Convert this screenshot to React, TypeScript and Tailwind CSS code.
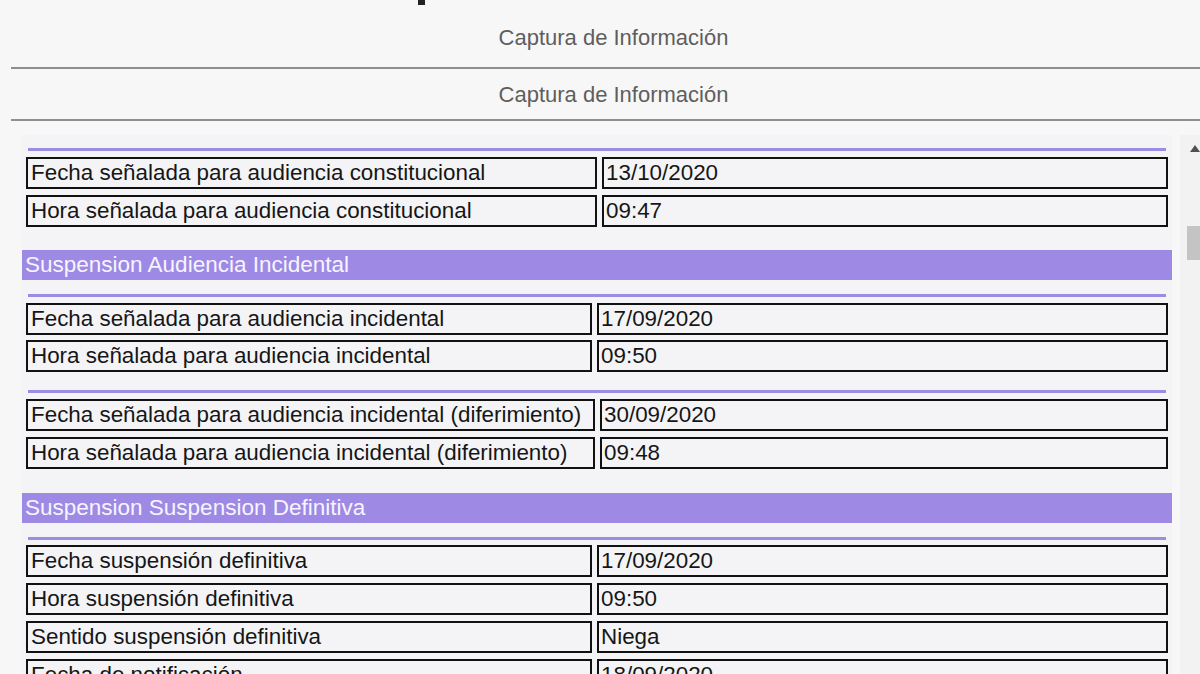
import React from "react";

type Row = { label: string; value: string };

const Divider = () => <div className="mx-[6px] h-[3px] bg-[#9d8ce3]" />;

const SectionBar = ({ title }: { title: string }) => (
  <div className="h-[30px] bg-[#9e8ae4] px-[3px] text-[22.5px] leading-[30px] text-[#f6f4ff]">
    {title}
  </div>
);

const DataTable = ({
  rows,
  labelWidth,
  gap = "gap-[5px]",
}: {
  rows: Row[];
  labelWidth: string;
  gap?: string;
}) => (
  <div className={`mx-[4px] flex flex-col ${gap}`}>
    {rows.map((r) => (
      <div key={r.label} className="flex gap-[5px]">
        <div
          className={`${labelWidth} h-[32px] shrink-0 overflow-hidden whitespace-nowrap border-2 border-[#111] px-[3px] text-[22.4px] leading-[28px] text-[#161616]`}
        >
          {r.label}
        </div>
        <div className="h-[32px] flex-1 border-2 border-[#111] px-[2px] text-[22.4px] leading-[28px] text-[#161616]">
          {r.value}
        </div>
      </div>
    ))}
  </div>
);

export default function App() {
  return (
    <div
      className="h-[674px] overflow-hidden bg-[#f7f7f7]"
      style={{ fontFamily: '"Liberation Sans", Arial, sans-serif' }}
    >
      <div className="h-[6px] pl-[418px]">
        <div className="h-[5px] w-[7px] bg-[#222]" />
      </div>

      <div className="ml-[11px]">
        <div className="flex h-[63px] items-center justify-center border-b-2 border-[#8e8e8e] pl-[16px] pt-[2px] text-[22px] text-[#5e5e5e]">
          Captura de Información
        </div>
        <div className="flex h-[52px] items-center justify-center border-b-2 border-[#8e8e8e] pl-[16px] pt-[1px] text-[22px] text-[#5e5e5e]">
          Captura de Información
        </div>
      </div>

      <div className="mt-[14px] flex">
        <div className="ml-[22px] w-[1150px] bg-[#f4f4f6] pt-[13px]">
          <Divider />
          <div className="mt-[6px]">
            <DataTable
              labelWidth="w-[571px]"
              gap="gap-[6px]"
              rows={[
                { label: "Fecha señalada para audiencia constitucional", value: "13/10/2020" },
                { label: "Hora señalada para audiencia constitucional", value: "09:47" },
              ]}
            />
          </div>

          <div className="mt-[23px]">
            <SectionBar title="Suspension Audiencia Incidental" />
          </div>

          <div className="mt-[14px]">
            <Divider />
          </div>
          <div className="mt-[6px]">
            <DataTable
              labelWidth="w-[566px]"
              rows={[
                { label: "Fecha señalada para audiencia incidental", value: "17/09/2020" },
                { label: "Hora señalada para audiencia incidental", value: "09:50" },
              ]}
            />
          </div>

          <div className="mt-[18px]">
            <Divider />
          </div>
          <div className="mt-[6px]">
            <DataTable
              labelWidth="w-[569px]"
              gap="gap-[6px]"
              rows={[
                { label: "Fecha señalada para audiencia incidental (diferimiento)", value: "30/09/2020" },
                { label: "Hora señalada para audiencia incidental (diferimiento)", value: "09:48" },
              ]}
            />
          </div>

          <div className="mt-[24px]">
            <SectionBar title="Suspension Suspension Definitiva" />
          </div>

          <div className="mt-[14px]">
            <Divider />
          </div>
          <div className="mt-[5px]">
            <DataTable
              labelWidth="w-[566px]"
              gap="gap-[6px]"
              rows={[
                { label: "Fecha suspensión definitiva", value: "17/09/2020" },
                { label: "Hora suspensión definitiva", value: "09:50" },
                { label: "Sentido suspensión definitiva", value: "Niega" },
                { label: "Fecha de notificación", value: "18/09/2020" },
              ]}
            />
          </div>
        </div>

        <div className="ml-[8px] flex w-[20px] flex-col items-end bg-[#f2f2f2] pt-[10px]">
          <svg width="10" height="7" viewBox="0 0 10 7">
            <polygon points="5,0 10,7 0,7" fill="#505050" />
          </svg>
          <div className="mt-[74px] h-[34px] w-[13px] bg-[#c4c4c4]" />
        </div>
      </div>
    </div>
  );
}
